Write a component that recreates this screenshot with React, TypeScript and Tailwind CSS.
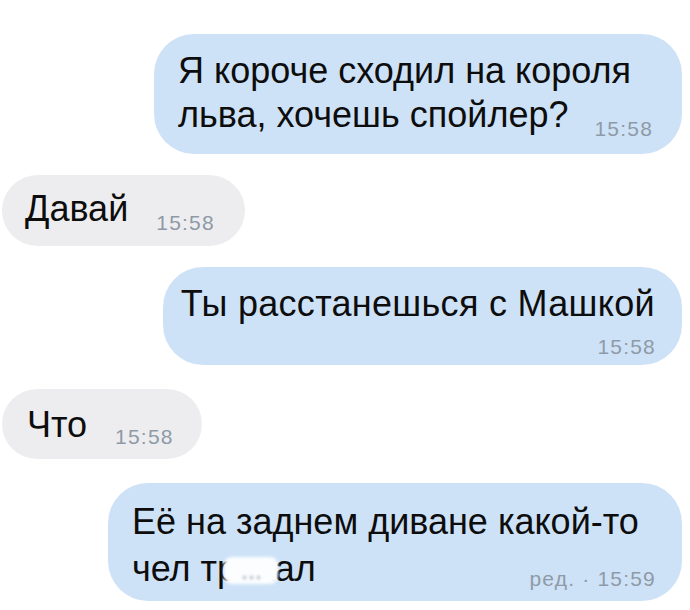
import React from 'react';

const Time = ({ children }: { children: React.ReactNode }) => (
  <span className="text-[21px] leading-[24px] tracking-[1.2px] text-[#8e9aa7]">{children}</span>
);

export default function App() {
  return (
    <div
      className="w-[690px] h-[610px] overflow-hidden bg-white flex flex-col text-[#0d0d0d] pr-[8px] pl-[2px]"
      style={{ fontFamily: '"Liberation Sans", Arial, sans-serif' }}
    >
      {/* outgoing 1 */}
      <div className="self-end mt-[34px] w-[528px] h-[120px] rounded-[40px] bg-[#cee2f7] pl-[24px] pt-[15px] text-[36px] leading-[44px]">
        <div>Я короче сходил на короля</div>
        <div className="flex items-baseline">
          <span>льва, хочешь спойлер?</span>
          <span className="ml-[26px] translate-y-[9px]">
            <Time>15:58</Time>
          </span>
        </div>
      </div>

      {/* incoming 1 */}
      <div className="self-start mt-[21px] w-[243px] h-[71px] rounded-[36px] bg-[#ededef] pl-[23px] pt-[12px] flex items-baseline text-[36px] leading-[44px]">
        <span>Давай</span>
        <span className="ml-[28px] translate-y-[9px]">
          <Time>15:58</Time>
        </span>
      </div>

      {/* outgoing 2 */}
      <div className="self-end mt-[21px] w-[519px] h-[98px] rounded-[40px] bg-[#cee2f7] pr-[27px] pt-[15px] flex flex-col items-end">
        <div className="text-[36px] leading-[44px] tracking-[0.3px]">Ты расстанешься с Машкой</div>
        <div className="mt-[9px] mr-[-1px]">
          <Time>15:58</Time>
        </div>
      </div>

      {/* incoming 2 */}
      <div className="self-start mt-[24px] w-[200px] h-[70px] rounded-[36px] bg-[#ededef] pl-[25px] pt-[14px] flex items-baseline text-[36px] leading-[44px]">
        <span>Что</span>
        <span className="ml-[28px] translate-y-[7px]">
          <Time>15:58</Time>
        </span>
      </div>

      {/* outgoing 3 */}
      <div className="self-end mt-[24px] w-[574px] h-[118px] rounded-[40px] bg-[#cee2f7] pl-[24px] pr-[26px] pt-[15px] text-[36px] leading-[47px]">
        <div>Её на заднем диване какой-то</div>
        <div className="flex items-baseline">
          <span className="relative">
            чел трахал
            {/* censor smudge */}
            <span className="absolute left-[92px] top-[12px] w-[54px] h-[27px] rounded-[8px] bg-[#fbfdff] blur-[1.5px] flex items-end justify-center gap-[4px] pb-[5px]">
              <span className="w-[3px] h-[3px] rounded-full bg-[#9aa3ad]" />
              <span className="w-[3px] h-[3px] rounded-full bg-[#9aa3ad]" />
              <span className="w-[3px] h-[3px] rounded-full bg-[#9aa3ad]" />
            </span>
          </span>
          <span className="ml-auto translate-y-[5px]">
            <Time>ред. · 15:59</Time>
          </span>
        </div>
      </div>
    </div>
  );
}
